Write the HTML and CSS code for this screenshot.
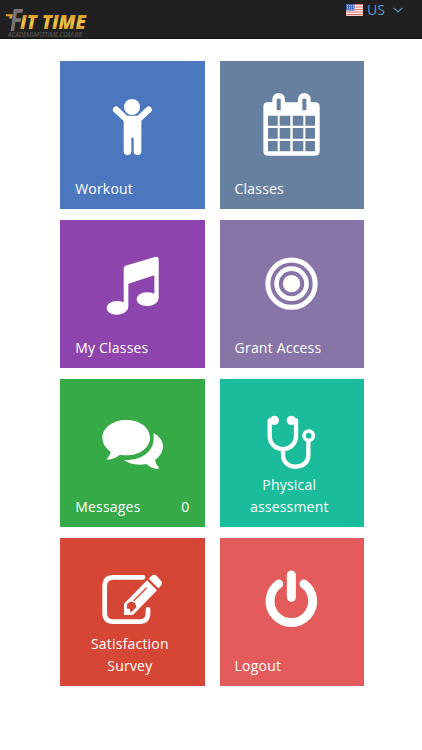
FILE: index.html
```
<!DOCTYPE html>
<html lang="en">
<head>
    <meta charset="UTF-8">
    <meta name="viewport" content="width=device-width, initial-scale=1.0">
    <title>Fit Time</title>
    <link rel="stylesheet" href="styles.css">
</head>
<body>
    <header class="header">
        <svg class="logo" viewBox="0 0 90 38">
            <defs>
                <linearGradient id="gold" x1="0" y1="0" x2="0" y2="1">
                    <stop offset="0.2" stop-color="#d9961f"/>
                    <stop offset="0.55" stop-color="#f5c94a"/>
                    <stop offset="0.9" stop-color="#d08b1c"/>
                </linearGradient>
            </defs>
            <path d="M6 14.200h7l-1 4.300H9l.6-2.200H6z" fill="#d9a02a"/>
            <text class="logo-f" x="10" y="30.500" textLength="12" lengthAdjust="spacingAndGlyphs">F</text>
            <text class="logo-name" x="20" y="29.300" textLength="66" lengthAdjust="spacingAndGlyphs">IT TIME</text>
            <text class="logo-sub" x="8" y="36.500" textLength="74" lengthAdjust="spacingAndGlyphs">ACADEMIAFITTIME.COM.BR</text>
        </svg>
        <a class="language" href="#">
            <svg class="flag" viewBox="0 0 17 12">
                <path d="M0 0h17v12H0z" fill="#f3e8e6"/>
                <path d="M0 .5h17M0 3h17M0 5.500h17M0 8h17M0 10.700h17" stroke="#df7469" stroke-width="1.200"/>
                <path d="M0 0h8.500v6.500H0z" fill="#4a6cc0"/>
                <path d="M1 1.500h7M1 3.300h7M1 5.100h7" stroke="#b9c8ee" stroke-width=".8" stroke-dasharray="1 1"/>
            </svg>
            <span>US</span>
            <svg class="arrow" viewBox="0 0 10 6"><path d="M.8.8 5 5 9.200.8"/></svg>
        </a>
    </header>

    <main class="tiles">
        <a class="tile blue" href="#">
            <svg class="icon" viewBox="16 17 433 282">
                <circle cx="232" cy="155" r="24"/>
                <path d="M184 163 214 191H252L282 163" class="line" stroke-width="19"/>
                <path d="M207 183h53v105a11 11 0 0 1-23 0V247h-7v41a11 11 0 0 1-23 0z"/>
            </svg>
            <span class="label">Workout</span>
        </a>
        <a class="tile slate" href="#">
            <svg class="icon" viewBox="14 17 433 282">
                <path fill-rule="evenodd" d="M157 141h14v-9a19 19 0 0 1 38 0v9h39v-9a19 19 0 0 1 38 0v9h14q13 0 13 13v134q0 13-13 13H157q-13 0-13-13V154q0-13 13-13zM184 130v35h12v-35zM261 130v35h12v-35zM158 181v30h29v-30zM193 181v30h32v-30zM232 181v30h32v-30zM270 181v30h29v-30zM158 218v32h29v-32zM193 218v32h32v-32zM232 218v32h32v-32zM270 218v32h29v-32zM158 257v31h29v-31zM193 257v31h32v-31zM232 257v31h32v-31zM270 257v31h29v-31z"/>
            </svg>
            <span class="label">Classes</span>
        </a>
        <a class="tile purple" href="#">
            <svg class="icon" viewBox="16 14 433 282">
                <path d="M207 158q0-5 5-7L300 125q12-3 12 9V247c0 15-17 25-35 25-19 0-31-9-31-20s13-21 31-21q12 0 22 4V180L221 205v68c0 15-16 25-34 25-19 0-31-9-31-20s13-21 31-21q11 0 20 4z"/>
            </svg>
            <span class="label">My Classes</span>
        </a>
        <a class="tile violet" href="#">
            <svg class="icon" viewBox="14 14 433 282">
                <circle cx="228.500" cy="205" r="26"/>
                <circle cx="228.500" cy="205" r="45" class="line" stroke-width="14"/>
                <circle cx="228.500" cy="205" r="71" class="line" stroke-width="15"/>
            </svg>
            <span class="label">Grant Access</span>
        </a>
        <a class="tile green" href="#">
            <svg class="icon" viewBox="15 12 433 282">
                <path d="M214 135c40 0 71 23 71 53s-31 53-71 53q-10 0-19-2-17 14-38 15-3-1 0-4 9-9 10-20c-15-10-25-25-25-42 0-30 32-53 72-53z"/>
                <path d="M295 174c18 9 29 24 29 40 0 17-10 31-24 41q2 13 11 22 2 4-3 5-19-2-34-15c-28 5-50 0-67-12 48 3 89-22 89-65q0-8-1-16z"/>
            </svg>
            <span class="label">Messages <span>0</span></span>
        </a>
        <a class="tile teal" href="#">
            <svg class="icon" viewBox="14 12 433 282">
                <path d="M177 136H163V184a39 38 0 0 0 79 0V136H228M203 225v15c0 22 17 35 38 35 23 0 38-14 38-35V200" class="line" stroke-width="13"/>
                <circle cx="177" cy="136" r="14"/>
                <circle cx="228" cy="136" r="14"/>
                <circle cx="280" cy="182" r="14" class="line" stroke-width="11"/>
            </svg>
            <span class="label center">Physical assessment</span>
        </a>
        <a class="tile red" href="#">
            <svg class="icon" viewBox="15 15 433 282">
                <path d="M264 133H175q-26 0-26 26v81q0 26 26 26h78q26 0 26-26v-11" class="line" stroke-width="14"/>
                <path d="M207 212 276 142 306 172 236 244q-4 2-8 2h-21z" stroke="#d64635" stroke-width="5" paint-order="stroke"/>
                <path d="m219 213-2 12 9 1 2 9 8-8 6-5-4-11-10-3zM236 203l39-39" fill="#d64635" stroke="#d64635" stroke-width="4"/>
                <path d="m281 137 8-8q8-7 16 0l13 14q6 7 0 15l-8 8z"/>
            </svg>
            <span class="label center">Satisfaction Survey</span>
        </a>
        <a class="tile coral" href="#">
            <svg class="icon" viewBox="14 15 433 282">
                <path d="M190 153a64 64 0 1 0 76 0M228 126v67" class="line" stroke-width="27"/>
            </svg>
            <span class="label">Logout</span>
        </a>
    </main>
</body>
</html>
```
FILE: styles.css
```
body {
    margin: 0;
    background-color: #fff;
    font-family: "Open Sans", "Noto Sans", sans-serif;
}
a {
    text-decoration: none;
}
.header {
    display: flex;
    justify-content: space-between;
    align-items: flex-start;
    height: 38.5px;
    padding-right: 19px;
    background-color: #202020;
    border-bottom: 1px solid #111;
    box-sizing: border-box;
}
.logo {
    width: 90px;
    height: 38px;
}
.logo-f {
    font: italic bold 30px "Open Sans", sans-serif;
    fill: #77777a;
}
.logo-name {
    font: italic 800 20px "Open Sans", sans-serif;
    fill: url(#gold);
}
.logo-sub {
    font: italic 6.5px "Open Sans", sans-serif;
    fill: #606060;
}
.language {
    display: flex;
    align-items: center;
    height: 20px;
    color: #5b9bd1;
    font-size: 14px;
    line-height: 20px;
}
.flag {
    width: 17px;
    height: 12px;
    margin-right: 4px;
}
.arrow {
    width: 10px;
    height: 6px;
    margin-left: 8px;
    fill: none;
    stroke: #5b9bd1;
    stroke-width: 1.2;
}
.tiles {
    display: grid;
    grid-template-columns: 144.4px 144.4px;
    grid-auto-rows: 148px;
    gap: 11.200px 15px;
    padding: 22.300px 0 0 60.200px;
}
.tile {
    display: flex;
    flex-direction: column;
    justify-content: space-between;
    padding-bottom: 9px;
    box-sizing: border-box;
    color: #fff;
}
.icon {
    width: 144.4px;
    height: 94px;
    overflow: visible;
    fill: #fff;
}
.line {
    fill: none;
    stroke: #fff;
    stroke-linecap: round;
    stroke-linejoin: round;
}
.label {
    display: flex;
    justify-content: space-between;
    padding: 0 15px;
    font-size: 14px;
    line-height: 22px;
    letter-spacing: 0.2px;
}
.center {
    display: block;
    padding: 0 25px 0 20px;
    text-align: center;
}
.blue {
    background-color: #4b77be;
}
.slate {
    background-color: #67809f;
}
.purple {
    background-color: #8e44ad;
}
.violet {
    background-color: #8775a7;
}
.green {
    background-color: #35aa47;
}
.teal {
    background-color: #1bbc9b;
}
.red {
    background-color: #d64635;
}
.coral {
    background-color: #e35b5a;
}
```
